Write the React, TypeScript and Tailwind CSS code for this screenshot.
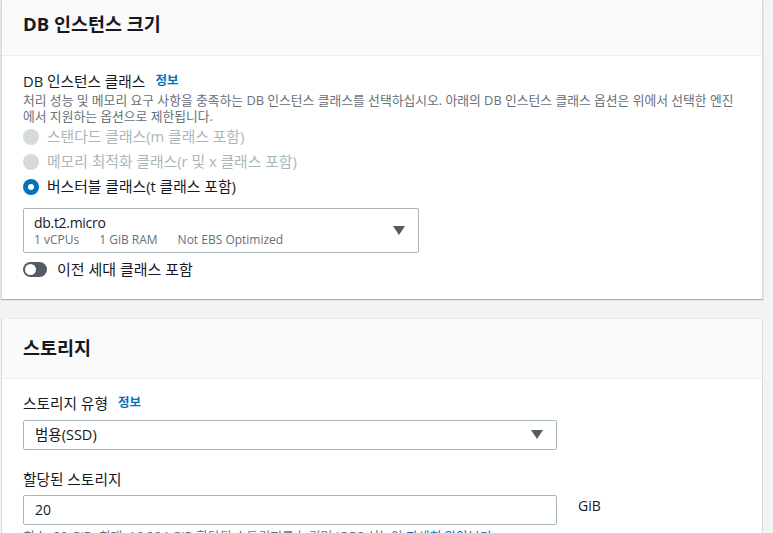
import React from "react";

const font = { fontFamily: '"Open Sans", "Noto Sans CJK KR", sans-serif' };

function Caret() {
  return (
    <svg width="12" height="9" viewBox="0 0 12 9" className="shrink-0">
      <path d="M0 0 L12 0 L6 9 Z" fill="#545b64" />
    </svg>
  );
}

function Radio({ label, state }: { label: string; state: "disabled" | "checked" }) {
  return (
    <div className="flex items-center h-[25px]">
      {state === "disabled" ? (
        <div className="w-[16px] h-[16px] rounded-full bg-[#d5dbdb] shrink-0" />
      ) : (
        <div className="w-[16px] h-[16px] rounded-full bg-[#0073bb] flex items-center justify-center shrink-0">
          <div className="w-[6px] h-[6px] rounded-full bg-white" />
        </div>
      )}
      <span className={"ml-[8px] text-[14.8px] " + (state === "disabled" ? "text-[#aab7b8]" : "text-[#16191f]")}>{label}</span>
    </div>
  );
}

export default function App() {
  return (
    <div className="w-[773px] h-[533px] overflow-hidden bg-[#f2f3f3]" style={font}>
      <div className="ml-[1px] w-[762px] bg-white border-l border-r border-[#d5dbdb] shadow-[0_1px_1px_0_rgba(0,28,36,0.3)]">
        <div className="h-[56px] bg-[#fafafa] border-b border-[#eaeded] flex items-center px-[21px]">
          <h2 className="text-[18.5px] font-bold text-[#16191f] leading-none mb-[6px]">DB 인스턴스 크기</h2>
        </div>
        <div className="px-[21px] pt-[15px] pb-[18px]">
          <div className="flex items-center text-[14.7px] text-[#16191f] leading-[20px]">
            DB 인스턴스 클래스<span className="ml-[10px] text-[12.5px] font-bold text-[#0073bb]">정보</span>
          </div>
          <p className="mt-[1px] text-[12.8px] text-[#687078] leading-[16px]">
            처리 성능 및 메모리 요구 사항을 충족하는 DB 인스턴스 클래스를 선택하십시오. 아래의 DB 인스턴스 클래스 옵션은 위에서 선택한 엔진
            <br />
            에서 지원하는 옵션으로 제한됩니다.
          </p>
          <div>
            <Radio label="스탠다드 클래스(m 클래스 포함)" state="disabled" />
            <Radio label="메모리 최적화 클래스(r 및 x 클래스 포함)" state="disabled" />
            <Radio label="버스터블 클래스(t 클래스 포함)" state="checked" />
          </div>
          <div className="mt-[9px] w-[396px] h-[45px] border border-[#aab7b8] rounded-[2px] flex items-center pl-[10px] pr-[13px]">
            <div className="flex-1">
              <div className="text-[14px] text-[#16191f] leading-[18px] tracking-[-0.3px]">db.t2.micro</div>
              <div className="text-[12px] text-[#687078] leading-[16px] flex gap-[20px]">
                <span>1 vCPUs</span>
                <span>1 GiB RAM</span>
                <span>Not EBS Optimized</span>
              </div>
            </div>
            <Caret />
          </div>
          <div className="flex items-center mt-[5px]">
            <div className="w-[24px] h-[15px] rounded-full bg-[#545b64] relative shrink-0">
              <div className="absolute left-[2px] top-[2px] w-[11px] h-[11px] rounded-full bg-white" />
            </div>
            <span className="ml-[10px] text-[15px] text-[#16191f]">이전 세대 클래스 포함</span>
          </div>
        </div>
      </div>

      <div className="mt-[19px] ml-[1px] w-[762px] bg-white border-l border-r border-t border-[#eaeded] border-l-[#d5dbdb] border-r-[#d5dbdb]">
        <div className="h-[60px] bg-[#fafafa] border-b border-[#eaeded] flex items-center px-[21px]">
          <h2 className="text-[18.5px] font-bold text-[#16191f] leading-none">스토리지</h2>
        </div>
        <div className="px-[21px] pt-[14px]">
          <div className="flex items-center text-[14.7px] text-[#16191f] leading-[20px]">
            스토리지 유형<span className="ml-[10px] text-[12.5px] font-bold text-[#0073bb]">정보</span>
          </div>
          <div className="mt-[7px] w-[534px] h-[30px] border border-[#aab7b8] rounded-[2px] flex items-center pl-[11px] pr-[13px]">
            <span className="flex-1 text-[14.5px] text-[#16191f]">범용(SSD)</span>
            <Caret />
          </div>
          <div className="mt-[19px] text-[14.7px] text-[#16191f] leading-[20px]">할당된 스토리지</div>
          <div className="mt-[6px] flex items-start">
            <div className="w-[534px] h-[30px] border border-[#aab7b8] rounded-[2px] flex items-center pl-[11px]">
              <span className="text-[14px] text-[#16191f]">20</span>
            </div>
            <span className="ml-[21px] text-[14px] text-[#16191f]">GiB</span>
          </div>
          <p className="mt-[3px] text-[12.8px] text-[#687078] leading-[16px]">
            최소: 20 GiB, 최대: 16,384 GiB 할당된 스토리지를 늘리면 IOPS 성능이 <span className="text-[#0073bb]">자세히 알아보기</span>
          </p>
        </div>
      </div>
    </div>
  );
}
